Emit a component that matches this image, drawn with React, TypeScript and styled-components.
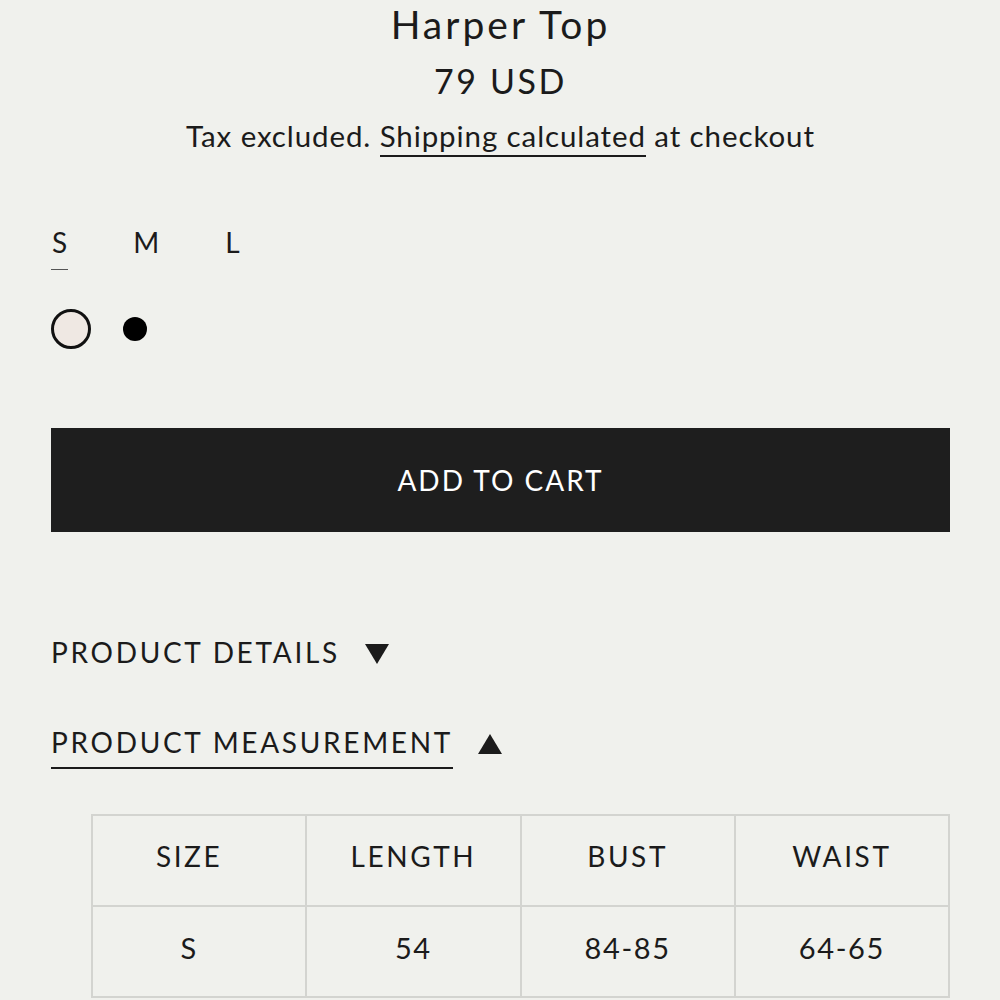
import React from "react";
import styled, { createGlobalStyle } from "styled-components";

const Global = createGlobalStyle`
  html, body { margin: 0; padding: 0; background: #f0f1ed; }
  body { font-family: Lato, "Open Sans", sans-serif; color: #1b1b1b; }
`;

const Page = styled.div`
  padding: 1px 50px 0 51px;
  display: flex;
  flex-direction: column;
`;

const Title = styled.h1`
  margin: 0;
  text-align: center;
  font-weight: 400;
  font-size: 39px;
  line-height: 1.2;
  letter-spacing: 3px;
`;

const Price = styled.div`
  margin-top: 13px;
  text-align: center;
  font-size: 34px;
  line-height: 1.2;
  letter-spacing: 2.6px;
`;

const Tax = styled.div`
  margin-top: 16px;
  text-align: center;
  font-size: 29.5px;
  line-height: 1.2;
  letter-spacing: 0.9px;
`;

const TaxLink = styled.span`
  border-bottom: 2px solid #1b1b1b;
  padding-bottom: 2px;
`;

const SizeRow = styled.div`
  margin-top: 73px;
  display: flex;
  gap: 64px;
  align-items: flex-start;
`;

const SizeOption = styled.div<{ $active?: boolean }>`
  font-size: 28px;
  line-height: 1.2;
  padding: 0 1px 9px;
  border-bottom: 1px solid ${(p) => (p.$active ? "#555" : "transparent")};
`;

const SwatchRow = styled.div`
  margin-top: 39px;
  display: flex;
  align-items: center;
  gap: 32px;
  height: 40px;
`;

const Swatch = styled.div<{ $size: number; $color: string; $selected?: boolean }>`
  box-sizing: border-box;
  width: ${(p) => p.$size}px;
  height: ${(p) => p.$size}px;
  border-radius: 50%;
  background: ${(p) => p.$color};
  border: ${(p) => (p.$selected ? "3px solid #111" : "none")};
`;

const CartButton = styled.button`
  margin-top: 79px;
  height: 104px;
  width: 100%;
  border: none;
  background: #1e1e1e;
  color: #fff;
  font-family: Lato, sans-serif;
  font-size: 28px;
  letter-spacing: 2px;
  text-transform: uppercase;
`;

const AccordionHead = styled.div<{ $top: number }>`
  margin-top: ${(p) => p.$top}px;
  display: flex;
  align-items: center;
  gap: 25px;
`;

const AccordionLabel = styled.span<{ $open?: boolean }>`
  font-size: 28px;
  line-height: 1.2;
  letter-spacing: 2.7px;
  padding-bottom: ${(p) => (p.$open ? "7px" : "0")};
  border-bottom: ${(p) => (p.$open ? "2px solid #1b1b1b" : "none")};
`;

const Arrow = styled.svg<{ $shift: number }>`
  width: 24px;
  height: 20px;
  flex: none;
  position: relative;
  top: ${(p) => p.$shift}px;
`;

const Table = styled.table`
  margin: 45px 0 0 40px;
  width: 859px;
  border-collapse: collapse;
  table-layout: fixed;
`;

const Cell = styled.td<{ $head?: boolean; $first?: boolean }>`
  box-sizing: border-box;
  border: 2px solid #d3d4d0;
  height: 91px;
  text-align: center;
  vertical-align: middle;
  font-size: ${(p) => (p.$head ? "28px" : "29px")};
  font-weight: 400;
  letter-spacing: ${(p) => (p.$head ? "2.6px" : "1.6px")};
  padding: 0 ${(p) => (p.$first ? "20px" : "0")} 8px 0;
`;

const heads = ["SIZE", "LENGTH", "BUST", "WAIST"];
const rows = [["S", "54", "84-85", "64-65"]];

export default function App() {
  return (
    <>
      <Global />
      <Page>
        <Title>Harper Top</Title>
        <Price>79 USD</Price>
        <Tax>
          Tax excluded. <TaxLink>Shipping calculated</TaxLink> at checkout
        </Tax>
        <SizeRow>
          <SizeOption $active>S</SizeOption>
          <SizeOption>M</SizeOption>
          <SizeOption>L</SizeOption>
        </SizeRow>
        <SwatchRow>
          <Swatch $size={40} $color="#efe8e3" $selected />
          <Swatch $size={24} $color="#000" />
        </SwatchRow>
        <CartButton>Add to cart</CartButton>
        <AccordionHead $top={104}>
          <AccordionLabel>PRODUCT DETAILS</AccordionLabel>
          <Arrow viewBox="0 0 24 20" $shift={2}>
            <polygon points="0,0 24,0 12,20" fill="#1b1b1b" />
          </Arrow>
        </AccordionHead>
        <AccordionHead $top={57}>
          <AccordionLabel $open>PRODUCT MEASUREMENT</AccordionLabel>
          <Arrow viewBox="0 0 24 20" $shift={-3}>
            <polygon points="12,0 24,20 0,20" fill="#1b1b1b" />
          </Arrow>
        </AccordionHead>
        <Table>
          <tbody>
            <tr>
              {heads.map((h, j) => (
                <Cell as="th" key={h} $head $first={j === 0}>
                  {h}
                </Cell>
              ))}
            </tr>
            {rows.map((r, i) => (
              <tr key={i}>
                {r.map((c, j) => (
                  <Cell key={j} $first={j === 0}>
                    {c}
                  </Cell>
                ))}
              </tr>
            ))}
          </tbody>
        </Table>
      </Page>
    </>
  );
}
